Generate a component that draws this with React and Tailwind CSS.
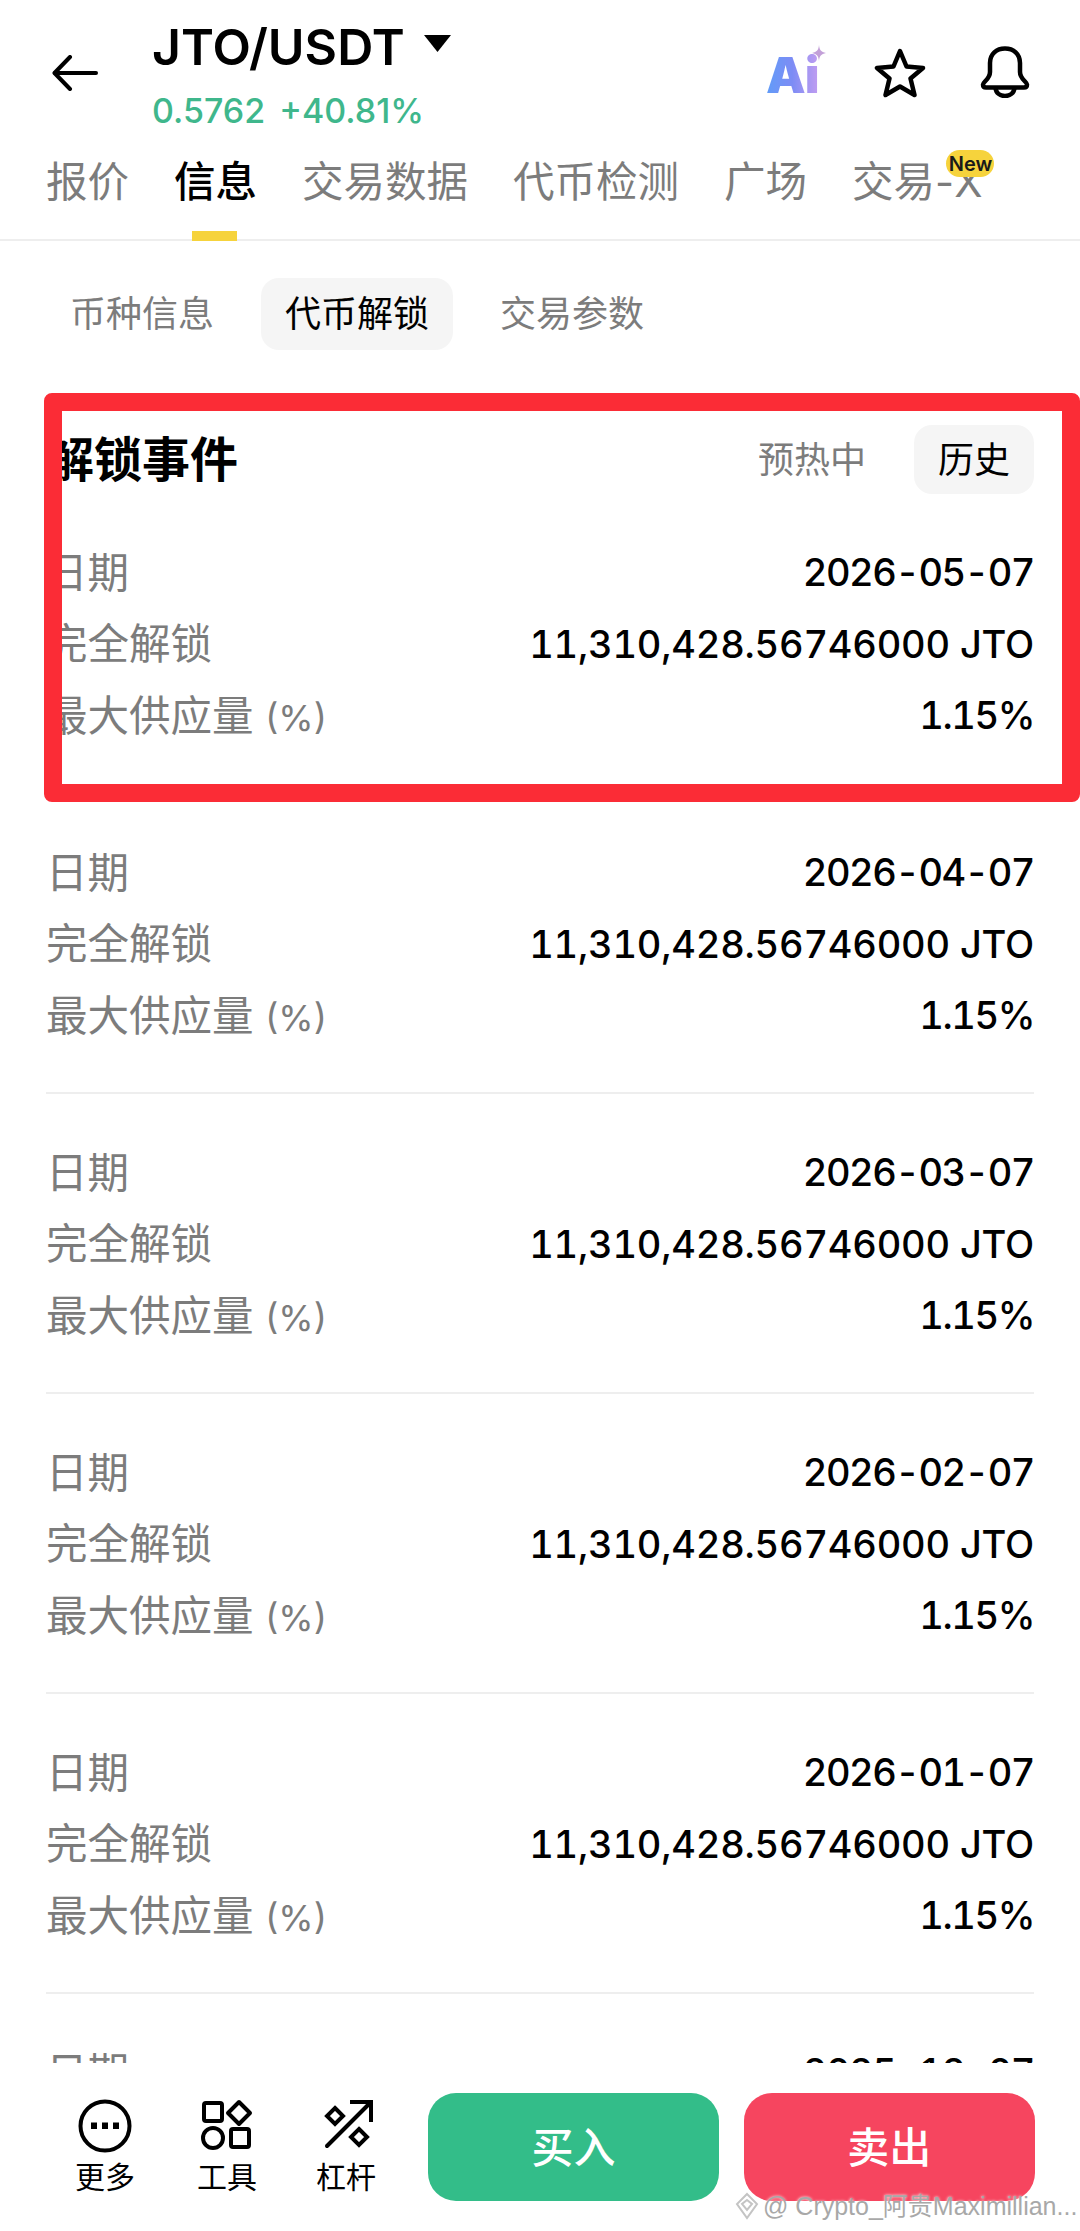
import React from 'react';

const events = ['2026-05-07', '2026-04-07', '2026-03-07', '2026-02-07', '2026-01-07', '2025-12-07'];
const tabs = ['报价', '信息', '交易数据', '代币检测', '广场', '交易-X'];
const subTabs = ['币种信息', '代币解锁', '交易参数'];

const BackIcon = () => (
  <svg width="46" height="36" viewBox="0 0 46 36" fill="none" stroke="black" strokeWidth="4" strokeLinecap="round" strokeLinejoin="round">
    <path d="M44 18H3" />
    <path d="M18 2L2.500 18L18 34" />
  </svg>
);

const StarIcon = () => (
  <svg width="52" height="50" viewBox="0 0 52 50" fill="none" stroke="black" strokeWidth="4.5" strokeLinejoin="round">
    <path d="M26 3L32.500 18.500L49 20L36.500 30.500L40.500 47L26 38.500L11.500 47L15.500 30.500L3 20L19.500 18.500Z" />
  </svg>
);

const BellIcon = () => (
  <svg width="50" height="52" viewBox="0 0 50 52" fill="none" stroke="black" strokeWidth="4.5" strokeLinejoin="round">
    <path d="M3 38.500C3 36 10 33 10 26V17C10 8 16.500 2.500 25 2.500C33.500 2.500 40 8 40 17V26C40 33 47 36 47 38.500C47 40.500 46 41.500 44 41.500H6C4 41.500 3 40.500 3 38.500Z" />
    <path d="M15.500 42C16 47 20 50 25 50C30 50 34 47 34.500 42" />
  </svg>
);

const MoreIcon = () => (
  <svg width="54" height="54" viewBox="0 0 54 54" fill="none">
    <circle cx="27" cy="27" r="24.500" stroke="black" strokeWidth="4" />
    <rect x="13" y="23.500" width="6" height="6.500" fill="black" />
    <rect x="24" y="23.500" width="6" height="6.500" fill="black" />
    <rect x="35" y="23.500" width="6" height="6.500" fill="black" />
  </svg>
);

const ToolsIcon = () => (
  <svg width="52" height="52" viewBox="0 0 52 52" fill="none" stroke="black" strokeWidth="4">
    <rect x="3" y="4" width="18" height="18" rx="2" />
    <path d="M38 3L49 14L38 25L27 14Z" strokeLinejoin="round" />
    <circle cx="12" cy="39" r="10" />
    <rect x="30" y="30" width="18" height="18" rx="2" />
  </svg>
);

const LeverIcon = () => (
  <svg width="50" height="50" viewBox="0 0 50 50" fill="none" stroke="black" strokeWidth="4" strokeLinecap="round">
    <path d="M3 47L46 4" />
    <path d="M26 3H47V23" strokeLinecap="butt" />
    <path d="M11 9L19 17L11 25L3 17Z" strokeLinecap="butt" />
    <path d="M35 30L43 38L35 46L27 38Z" strokeLinecap="butt" />
  </svg>
);

const Row = ({ label, value, valueClass }) => (
  <div className="flex h-[71.5px] items-center justify-between">
    <span className="text-[41.5px] text-[#7c7c7c]">{label}</span>
    <span className={`text-[38px] font-medium tabular-nums text-black ${valueClass}`}>{value}</span>
  </div>
);

export default function App() {
  return (
    <div className="relative flex h-[2231px] w-[1080px] flex-col overflow-hidden bg-white font-['Inter','Noto_Sans_CJK_SC',sans-serif]">
      {/* Header */}
      <div className="flex h-[130px] shrink-0 pl-[52px] pr-[50px]">
        <div className="mt-[55px]">
          <BackIcon />
        </div>
        <div className="ml-[54px] pt-[20px]">
          <div className="flex h-[54px] items-center">
            <span className="text-[50px] font-semibold leading-none text-black">JTO/USDT</span>
            <svg className="mb-[8px] ml-[19px]" width="27" height="17" viewBox="0 0 27 17">
              <path d="M0 0H27L13.500 17Z" fill="black" />
            </svg>
          </div>
          <div className="mt-[20px] flex gap-[14px] text-[34px] font-medium leading-none text-[#3fb78c]">
            <span>0.5762</span>
            <span>+40.81%</span>
          </div>
        </div>
        <div className="ml-auto mt-[46px] flex items-start">
          <div className="relative mr-[52px] mt-[6px] h-[46px] w-[56px]">
            <span className="bg-gradient-to-r from-[#5f9cf8] via-[#7d8cf5] to-[#c29df0] bg-clip-text text-[50px] font-black leading-[46px] tracking-[-1px] text-transparent">
              Ai
            </span>
            <svg className="absolute right-[-4px] top-[-7px]" width="14" height="16" viewBox="0 0 14 16">
              <path d="M7 0C7.500 5 9 7 14 8C9 9 7.500 11 7 16C6.500 11 5 9 0 8C5 7 6.500 5 7 0Z" fill="#c3a0d8" />
            </svg>
          </div>
          <div className="mr-[54px] mt-[2px]">
            <StarIcon />
          </div>
          <BellIcon />
        </div>
      </div>

      {/* Tabs */}
      <div className="flex h-[111px] shrink-0 gap-[45px] border-b-2 border-[#eeeeee] px-[46px]">
        {tabs.map((tab) => (
          <div
            key={tab}
            className={`relative h-[109px] whitespace-nowrap pt-[29px] text-[41.5px] leading-[46px] ${tab === '信息' ? 'font-medium text-black' : 'text-[#7c7c7c]'}`}
          >
            {tab}
            {tab === '信息' && <div className="absolute bottom-[-2px] left-[18px] h-[10px] w-[45px] bg-[#f6d33c]"></div>}
            {tab === '交易-X' && (
              <div className="absolute right-[-12px] top-[20px] flex h-[27px] w-[48px] items-center justify-center rounded-[14px] bg-[#f6d33c] text-[20px] font-semibold leading-none text-[#1a1a1a]">
                New
              </div>
            )}
          </div>
        ))}
      </div>

      {/* Sub tabs */}
      <div className="mt-[37px] flex shrink-0 gap-[23px] px-[46px]">
        {subTabs.map((tab) => (
          <div
            key={tab}
            className={`flex h-[72px] items-center rounded-[18px] px-[24px] text-[36px] ${tab === '代币解锁' ? 'bg-[#f5f5f5] text-black' : 'text-[#7c7c7c]'}`}
          >
            {tab}
          </div>
        ))}
      </div>

      {/* Section title */}
      <div className="mt-[75px] flex h-[69px] shrink-0 items-center px-[46px]">
        <span className="text-[48px] font-semibold text-black">解锁事件</span>
        <span className="ml-auto text-[36px] text-[#7c7c7c]">预热中</span>
        <div className="ml-[48px] flex h-[69px] w-[120px] items-center justify-center rounded-[18px] bg-[#f5f5f5] text-[36px] text-black">
          历史
        </div>
      </div>

      {/* Unlock list */}
      <div className="min-h-0 flex-1 overflow-hidden px-[46px]">
        {events.map((date) => (
          <div key={date} className="border-b-2 border-[#eeeeee] pb-[40.5px] pt-[43px]">
            <Row label="日期" value={date} valueClass="tracking-[-1.5px]" />
            <Row label="完全解锁" value="11,310,428.56746000 JTO" valueClass="tracking-[-0.2px]" />
            <Row
              label={<>最大供应量 <span className="text-[36px]">(%)</span></>}
              value="1.15%"
              valueClass="tracking-[-1.4px]"
            />
          </div>
        ))}
      </div>

      {/* Bottom bar */}
      <div className="flex h-[168px] shrink-0 bg-white pl-[75px] pr-[45px] pt-[30px]">
        <div className="flex w-[354px] gap-[62px] pt-[6px]">
          <div className="flex w-[60px] flex-col items-center">
            <MoreIcon />
            <span className="mt-[6px] whitespace-nowrap text-[30px] leading-[36px] text-black">更多</span>
          </div>
          <div className="flex w-[60px] flex-col items-center">
            <ToolsIcon />
            <span className="mt-[8px] whitespace-nowrap text-[30px] leading-[36px] text-black">工具</span>
          </div>
          <div className="flex w-[60px] flex-col items-center">
            <LeverIcon />
            <span className="mr-[6px] mt-[10px] whitespace-nowrap text-[30px] leading-[36px] text-black">杠杆</span>
          </div>
        </div>
        <div className="flex h-[108px] w-[291px] items-center justify-center rounded-[28px] bg-[#33bd89] text-[42px] font-medium text-white">
          买入
        </div>
        <div className="ml-[25px] flex h-[108px] w-[292px] items-center justify-center rounded-[28px] bg-[#f6455f] text-[42px] font-medium text-white">
          卖出
        </div>
      </div>

      {/* Red annotation */}
      <div className="pointer-events-none absolute left-[44px] top-[393px] h-[409px] w-[1036px] rounded-[8px] border-[18px] border-[#fb2c36]"></div>

      {/* Watermark */}
      <div className="absolute left-[735px] top-[2188px] flex items-center gap-[4px] whitespace-nowrap font-['Liberation_Sans','Noto_Sans_CJK_SC',sans-serif] text-[25px] leading-[36px] text-[#a8a8a8] [text-shadow:0_0_3px_white]">
        <svg width="24" height="28" viewBox="0 0 24 28" fill="none" stroke="#c4c4c4" strokeWidth="2">
          <path d="M12 2L22 12L12 26L2 12Z" />
          <path d="M12 8L17 12L12 18L7 12Z" />
        </svg>
        <span>@ Crypto_阿贵Maximillian...</span>
      </div>
    </div>
  );
}
